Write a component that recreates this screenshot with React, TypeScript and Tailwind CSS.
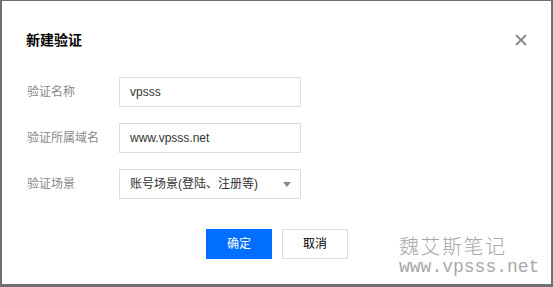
export default function App() {
  const rows = [
    { label: '验证名称', value: 'vpsss' },
    { label: '验证所属域名', value: 'www.vpsss.net' },
  ]

  return (
    <div className="relative h-[287px] w-[553px] overflow-hidden border-b-[3px] border-l-2 border-r-2 border-t border-[#707070] bg-white font-['Liberation_Sans','Noto_Sans_CJK_SC',sans-serif]">
      <div className="mt-[29px] flex h-[20px] items-center justify-between pl-[24px] pr-[24px]">
        <h1 className="text-[14px] font-bold leading-[20px] text-black">新建验证</h1>
        <svg width="12" height="12" viewBox="0 0 12 12" className="text-[#888]">
          <path d="M1 1 L11 11 M11 1 L1 11" stroke="currentColor" strokeWidth="1.8" />
        </svg>
      </div>

      <div className="mt-[27px] flex flex-col gap-[16px] pl-[25px]">
        {rows.map((r) => (
          <div key={r.label} className="flex items-center">
            <span className="w-[92px] text-[12px] text-[#888]">{r.label}</span>
            <div className="flex h-[30px] w-[182px] items-center border border-[#dcdcdc] px-[10px] text-[12px] text-[#333]">
              {r.value}
            </div>
          </div>
        ))}
        <div className="flex items-center">
          <span className="w-[92px] text-[12px] text-[#888]">验证场景</span>
          <div className="flex h-[30px] w-[182px] items-center justify-between border border-[#dcdcdc] pl-[10px] pr-[9px] text-[12px] text-[#333]">
            <span>账号场景(登陆、注册等)</span>
            <svg width="8" height="5" viewBox="0 0 8 5">
              <path d="M0 0 H8 L4 5 Z" fill="#888" />
            </svg>
          </div>
        </div>
      </div>

      <div className="mt-[30px] flex gap-[10px] pl-[204px]">
        <button className="h-[30px] w-[66px] bg-[#006eff] text-[12px] text-white">确定</button>
        <button className="h-[30px] w-[66px] border border-[#dcdcdc] bg-white text-[12px] text-black">取消</button>
      </div>

      <div className="pointer-events-none absolute left-[397px] top-[233px] flex flex-col text-[#a8a8a8]">
        <p className="font-['Noto_Sans_CJK_SC',serif] text-[20px] font-light leading-[24px] tracking-[1.5px]">魏艾斯笔记</p>
        <p className="font-['Liberation_Mono',monospace] text-[18px] leading-[18px]">www.vpsss.net</p>
      </div>
    </div>
  )
}
